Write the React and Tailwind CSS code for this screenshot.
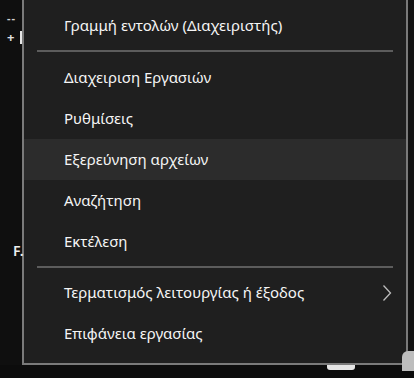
import React from "react";

const groups = [
  [{ label: "Γραμμή εντολών (Διαχειριστής)" }],
  [
    { label: "Διαχειριση Εργασιών" },
    { label: "Ρυθμίσεις" },
    { label: "Εξερεύνηση αρχείων", active: true },
    { label: "Αναζήτηση" },
    { label: "Εκτέλεση" },
  ],
  [
    { label: "Τερματισμός λειτουργίας ή έξοδος", submenu: true },
    { label: "Επιφάνεια εργασίας" },
  ],
];

const MenuItem = ({ item }) => (
  <div
    className={`h-[41px] flex items-center justify-between pl-[40px] pr-[14px] ${
      item.active ? "bg-[#2c2c2c]" : ""
    }`}
  >
    <span className="text-[15px] text-[#f5f5f5]">{item.label}</span>
    {item.submenu && (
      <svg width="10" height="18" viewBox="0 0 10 18" fill="none">
        <path d="M1.5 1.5 L8.5 9 L1.5 16.5" stroke="#bdbdbd" strokeWidth="1.3" />
      </svg>
    )}
  </div>
);

const Separator = () => (
  <div className="h-[11px] flex items-center pl-[13px] pr-[13px]">
    <div className="h-[2px] w-full bg-[#5c5c5c]" />
  </div>
);

export default function App() {
  return (
    <div
      className="w-[414px] h-[378px] bg-[#0e0e0e] overflow-hidden flex flex-col"
      style={{ fontFamily: "'Noto Sans', 'Open Sans', sans-serif" }}
    >
      <div className="flex h-[365px] shrink-0">
        <div className="w-[22px] shrink-0 bg-[#0f0f0f] relative text-white">
          <span className="absolute left-[7px] top-[10px] text-[11px] font-bold tracking-[1px] text-[#cfcfcf]">--</span>
          <span className="absolute left-[7px] top-[28px] text-[13px] font-bold text-[#e0e0e0]">+</span>
          <div className="absolute left-[20px] top-[31px] w-[2px] h-[13px] bg-[#e8e8e8]" />
          <span className="absolute left-[13px] top-[240px] text-[14px] font-semibold text-[#eeeeee]">F.</span>
        </div>
        <div className="w-[386px] shrink-0 bg-[#1f1f1f] border-l-2 border-r-2 border-b-2 border-[#7a7a7a] pt-[5px] pb-[9px] flex flex-col">
          {groups.map((group, gi) => (
            <React.Fragment key={gi}>
              {gi > 0 && <Separator />}
              {group.map((item) => (
                <MenuItem key={item.label} item={item} />
              ))}
            </React.Fragment>
          ))}
        </div>
        <div className="flex-1 bg-[#131313]" />
      </div>
      <div className="flex-1 bg-[#0c0c0c] relative">
        <div className="absolute left-[327px] top-0 w-[28px] h-[5px] rounded-b-[3px] bg-[#e5e5e5]" />
        <div className="absolute left-[402px] top-[-14px] w-[12px] h-[20px] rounded-tl-[6px] bg-[#bdbdbd]" />
      </div>
    </div>
  );
}
